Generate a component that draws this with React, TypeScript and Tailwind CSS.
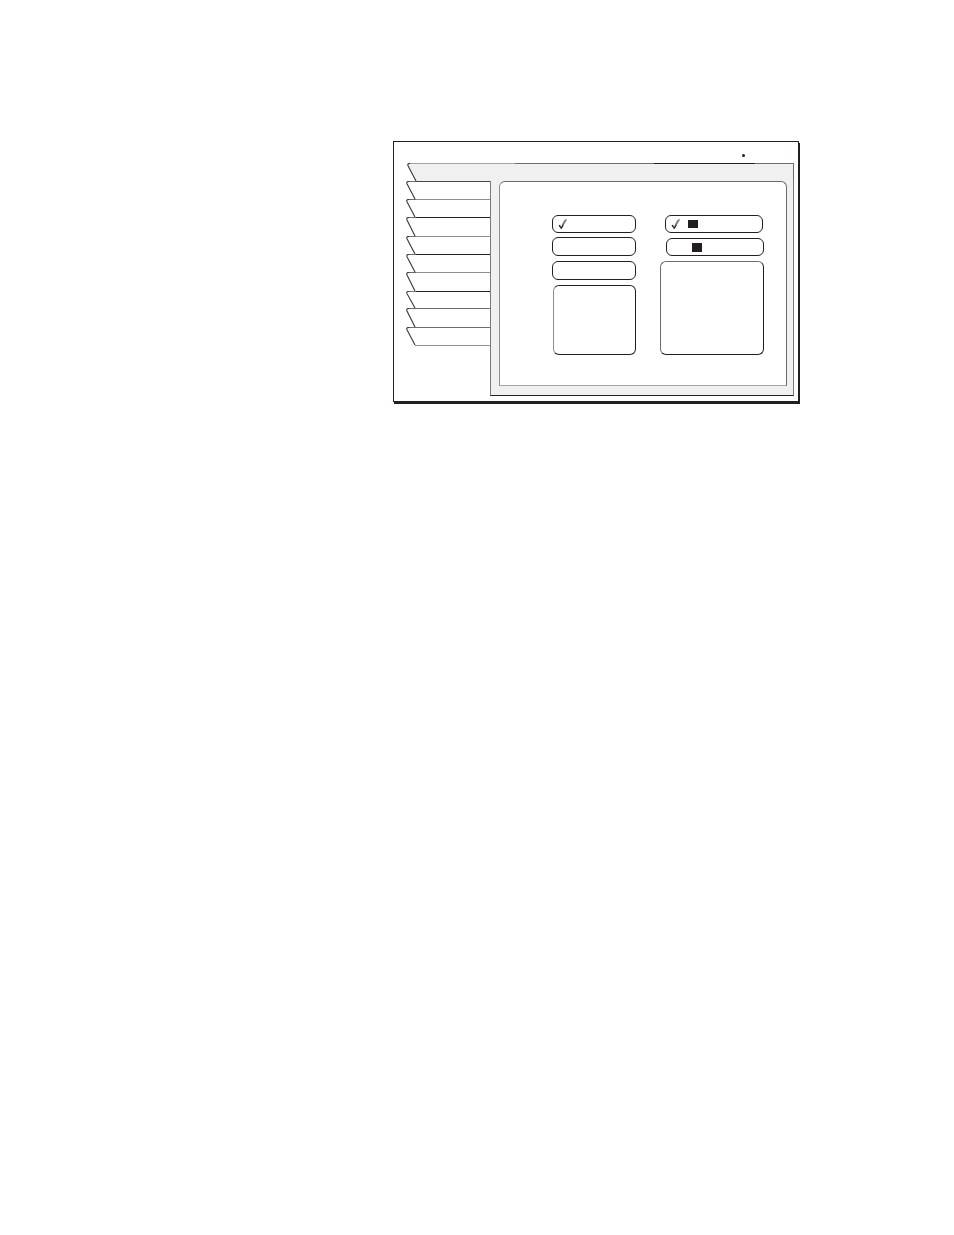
import React from "react";

const tabs = [
  { id: 1, size: "h-[18px]", line: "border-[#4a4748]" },
  { id: 2, size: "h-[18px]", line: "border-[#8f8d8e]" },
  { id: 3, size: "h-[19px]", line: "border-[#231f20]" },
  { id: 4, size: "h-[18px]", line: "border-[#8f8d8e]" },
  { id: 5, size: "h-[18px]", line: "border-[#231f20]" },
  { id: 6, size: "h-[19px]", line: "border-[#8f8d8e]" },
  { id: 7, size: "h-[17px]", line: "border-[#231f20]" },
  { id: 8, size: "h-[19px]", line: "border-[#6d6b6c]" },
  { id: 9, size: "h-[18px]", line: "border-[#6d6b6c]" },
];

function Slant({ filled = false }: { filled?: boolean }) {
  return (
    <svg
      className="block h-full w-[10px] shrink-0"
      viewBox="0 0 10 18"
      preserveAspectRatio="none"
      fill="none"
      aria-hidden="true"
    >
      <path d="M10 .5H2.5Q.2 .5 1 2.8L9 18H10Z" fill={filled ? "#f0f0f0" : "#fff"} />
      <path d="M10 .5H3" stroke={filled ? "#a5a4a4" : "#6d6b6c"} />
      <path d="M3.2 .5H2.5Q.2 .5 1 2.8L9 18" stroke="#3a3637" strokeWidth="1.1" />
    </svg>
  );
}

function Check() {
  return (
    <svg className="h-[11px] w-[9px] shrink-0" viewBox="0 0 9 11" fill="none" aria-hidden="true">
      <path d="M.8 6.3 2.4 5.4 3.6 7.2 6.4 1.4 8.6.4 4 9.8H3Z" fill="#c4c2c3" />
      <path d="M1 6.2 3.2 9.3 5.2 6.2" stroke="#231f20" strokeWidth="1.2" />
      <path d="M5 6.4 8.4.6M3.9 6.6 6.6 1.4 8.4.6" stroke="#4a4748" strokeWidth=".7" />
    </svg>
  );
}

function Option({
  label,
  className,
  children,
}: {
  label: string;
  className: string;
  children?: React.ReactNode;
}) {
  return (
    <button
      type="button"
      aria-label={label}
      className={`flex items-center rounded-[6px] border border-[#231f20] bg-white ${className}`}
    >
      {children}
    </button>
  );
}

export default function App() {
  return (
    <div className="min-h-screen bg-white pt-[141px] pr-[155px] pl-[393px] font-['Liberation_Sans',sans-serif]">
      <main className="border border-[#231f20] bg-white pr-1 pb-[5px] pl-3 shadow-[1px_2px_0_#231f20]">
        <header className="flex h-[21px] items-center justify-end pt-[5px] pr-[49px]">
          <span className="size-[3px] rounded-full bg-[#231f20]" />
        </header>

        <div className="flex h-[18px] pl-px">
          <Slant filled />
          <div className="flex-1 border-r border-[#6d6b6c] bg-[#f0f0f0]">
            <div className="flex h-px">
              <span className="w-[26%] bg-[#a5a4a4]" />
              <span className="w-[37%] bg-[#6d6b6c]" />
              <span className="w-[27%] bg-[#231f20]" />
              <span className="flex-1 bg-[#6d6b6c]" />
            </div>
          </div>
        </div>

        <div className="flex">
          <nav className="flex w-[84px] shrink-0 flex-col" aria-label="Sections">
            {tabs.map((tab) => (
              <button key={tab.id} type="button" aria-label={`Section ${tab.id}`} className={`flex ${tab.size}`}>
                <Slant />
                <span className={`h-full flex-1 border-t ${tab.line}`} />
              </button>
            ))}
            <span className="ml-[9px] h-px shrink-0 bg-[#8f8d8e]" />
          </nav>

          <section className="flex-1 border-x border-b border-x-[#7b797a] border-b-[#231f20] bg-[#f0f0f0] pr-[6px] pb-[9px] pl-2">
            <div className="flex items-start justify-between rounded-t-[6px] border border-[#6d6b6c] border-b-[#a5a4a4] border-l-[#8f8d8e] bg-white pt-[33px] pr-[22px] pb-[30px] pl-[52px]">
              <div className="flex w-[84px] flex-col">
                <Option label="Option 1" className="h-[18px] pl-[5px]">
                  <Check />
                </Option>
                <Option label="Option 2" className="mt-1 h-[19px]" />
                <Option label="Option 3" className="mt-[5px] h-[19px]" />
                <div className="mt-[5px] ml-px h-[70px] rounded-[6px] border border-[#231f20] border-l-[#8f8d8e]" />
              </div>

              <div className="flex w-[104px] flex-col items-end">
                <Option label="Option 4" className="mr-px h-[18px] w-[98px] gap-[8px] pl-[5px]">
                  <Check />
                  <span className="h-2 w-[10px] bg-[#231f20]" />
                </Option>
                <Option label="Option 5" className="mt-[5px] h-[18px] w-[98px] pl-[25px]">
                  <span className="h-[9px] w-[10px] bg-[#231f20]" />
                </Option>
                <div className="mt-[5px] h-[94px] w-full rounded-[6px] border border-[#231f20] border-t-[#6d6b6c] border-l-[#6d6b6c]" />
              </div>
            </div>
          </section>
        </div>
      </main>
    </div>
  );
}
